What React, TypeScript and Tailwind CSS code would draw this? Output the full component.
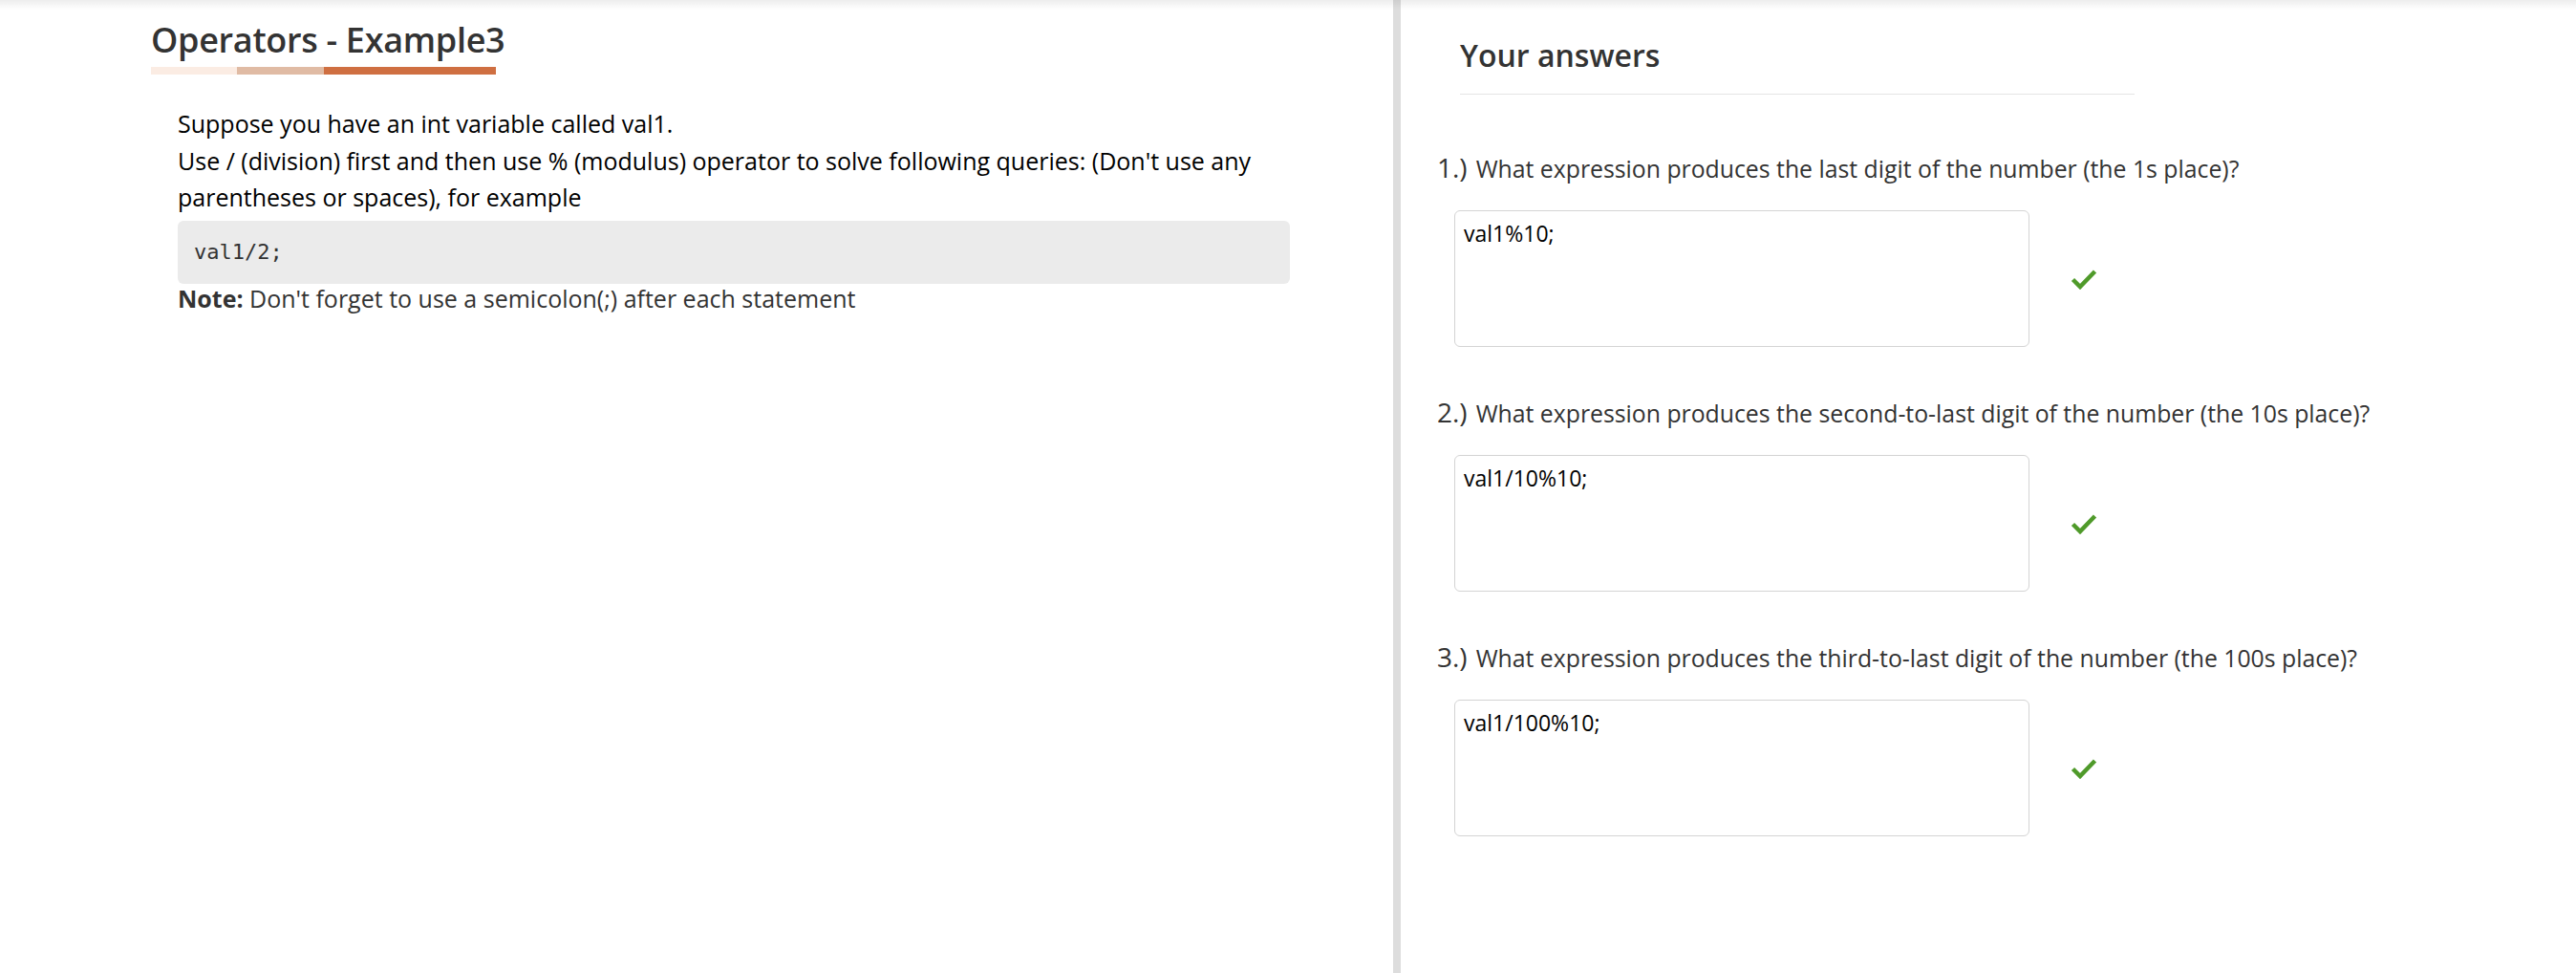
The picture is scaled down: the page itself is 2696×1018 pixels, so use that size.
import React from 'react';

const questions = [
  {
    q: 'What expression produces the last digit of the number (the 1s place)?',
    a: 'val1%10;',
  },
  {
    q: 'What expression produces the second-to-last digit of the number (the 10s place)?',
    a: 'val1/10%10;',
  },
  {
    q: 'What expression produces the third-to-last digit of the number (the 100s place)?',
    a: 'val1/100%10;',
  },
];

function CheckMark() {
  return (
    <svg width="28" height="22" viewBox="0 0 28 22" className="flex-shrink-0">
      <path d="M2.5 11.5 L10 19 L25.5 3" fill="none" stroke="#4f9a2a" strokeWidth="4.5" strokeLinejoin="miter" />
    </svg>
  );
}

export default function App() {
  return (
    <div
      className="relative flex w-full h-screen bg-white overflow-hidden"
      style={{ fontFamily: '"Open Sans", "Noto Sans", sans-serif' }}
    >
      {/* top shadow */}
      <div className="pointer-events-none absolute left-0 right-0 top-0 h-[10px] bg-gradient-to-b from-[rgba(0,0,0,0.07)] to-transparent" />

      {/* Left: problem */}
      <div className="w-[1458px] flex-shrink-0 pl-[158px] pt-[20px]">
        <div className="inline-block">
          <h1 className="text-[36px] leading-[44px] font-semibold text-[#333333] tracking-[-0.3px]">
            Operators - Example3
          </h1>
          <div className="mt-[6px] flex h-[8px] w-[361px]">
            <div className="w-1/4 bg-[#fbece3]" />
            <div className="w-1/4 bg-[#e0bba4]" />
            <div className="w-1/2 bg-[#cf6f41]" />
          </div>
        </div>

        <div className="pl-[28px] pt-[26px] w-[1192px]">
          <p className="text-[25px] leading-[38.5px] text-black">
            Suppose you have an int variable called val1.
            <br />
            Use / (division) first and then use % (modulus) operator to solve following queries: (Don't use any parentheses or spaces), for example
          </p>
          <pre className="mt-[5px] h-[66px] rounded-md bg-[#ebebeb] px-[17px] flex items-center text-[22px] text-[#333333] font-['DejaVu_Sans_Mono',monospace]">
            val1/2;
          </pre>
          <p className="text-[25px] leading-[30px] text-[#333333]">
            <span className="font-bold">Note:</span> Don't forget to use a semicolon(;) after each statement
          </p>
        </div>
      </div>

      {/* divider */}
      <div className="w-[8px] flex-shrink-0 bg-[#dddddd]" />

      {/* Right: answers */}
      <div className="flex-1 pl-[38px] pt-[38px]">
        <div className="ml-[24px] w-[706px]">
          <h2 className="text-[32px] leading-[40px] font-semibold text-[#333333]">Your answers</h2>
          <div className="mt-[20px] h-px bg-[#e5e5e5]" />
        </div>

        <div className="mt-[58px] flex flex-col gap-[50px]">
          {questions.map((item, i) => (
            <div key={i}>
              <div className="flex items-baseline gap-[9px] h-[36px] text-[#333333]">
                <span className="text-[28px] leading-[36px]">{i + 1}.)</span>
                <span className="text-[24.8px] leading-[36px]">{item.q}</span>
              </div>
              <div className="mt-[27px] ml-[18px] flex items-center">
                <textarea
                  readOnly
                  value={item.a}
                  className="w-[602px] h-[143px] resize-none rounded-md border border-[#d4d4d4] px-[9px] py-[8px] text-[23px] leading-[30px] text-black outline-none"
                  style={{ fontFamily: '"Open Sans", "Noto Sans", sans-serif' }}
                />
                <div className="ml-[43px]">
                  <CheckMark />
                </div>
              </div>
            </div>
          ))}
        </div>
      </div>
    </div>
  );
}
